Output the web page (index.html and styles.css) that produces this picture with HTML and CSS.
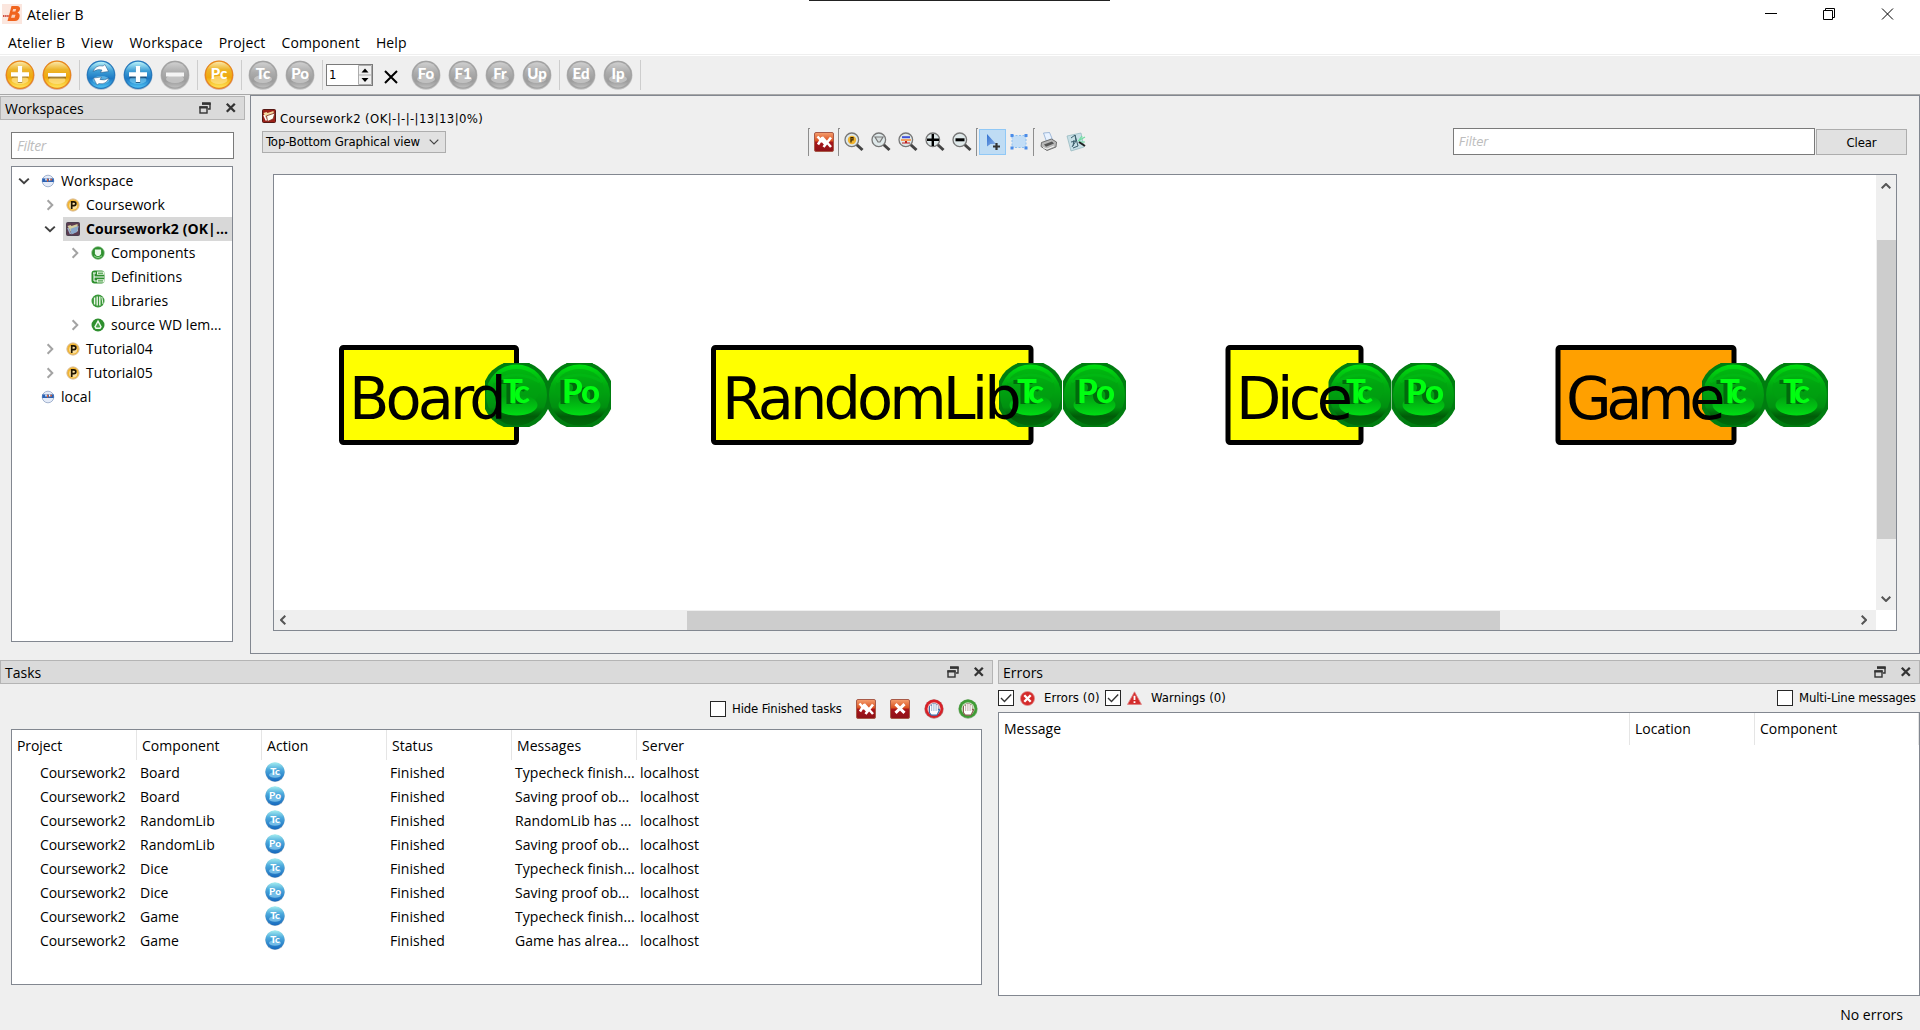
FILE: index.html
```html
<!DOCTYPE html>
<html lang="en">
<head>
<meta charset="utf-8">
<title>Atelier B</title>
<link rel="stylesheet" href="styles.css">
</head>
<body>
<svg class="defs" width="0" height="0">
  <defs>
    <linearGradient id="g-orange" x2="0" y2="1"><stop offset="0" stop-color="#fbe7a6"/><stop offset=".3" stop-color="#edb52b"/><stop offset=".6" stop-color="#f0a80c"/><stop offset="1" stop-color="#ffe55a"/></linearGradient>
    <linearGradient id="g-blue" x2="0" y2="1"><stop offset="0" stop-color="#b9f3fa"/><stop offset=".35" stop-color="#3f9fd6"/><stop offset=".65" stop-color="#1b78c4"/><stop offset="1" stop-color="#4fc3f3"/></linearGradient>
    <linearGradient id="g-gray" x2="0" y2="1"><stop offset="0" stop-color="#cfcfcf"/><stop offset=".4" stop-color="#adadad"/><stop offset=".75" stop-color="#9c9c9c"/><stop offset="1" stop-color="#bdbdbd"/></linearGradient>
    <linearGradient id="g-task" x2="0" y2="1"><stop offset="0" stop-color="#a5eef0"/><stop offset=".4" stop-color="#4aa8dc"/><stop offset="1" stop-color="#1769bd"/></linearGradient>
    <linearGradient id="g-red" x2="0" y2="1"><stop offset="0" stop-color="#f6a070"/><stop offset=".45" stop-color="#d9501f"/><stop offset=".5" stop-color="#a8161a"/><stop offset="1" stop-color="#8e1218"/></linearGradient>
    <linearGradient id="g-green" x2="0" y2="1"><stop offset="0" stop-color="#00e010"/><stop offset=".35" stop-color="#00a810"/><stop offset=".7" stop-color="#009010"/><stop offset=".85" stop-color="#005c08"/><stop offset="1" stop-color="#006c0a"/></linearGradient>
    <linearGradient id="g-pool" x2="0" y2="1"><stop offset="0" stop-color="#009a10"/><stop offset="1" stop-color="#00dc14"/></linearGradient>
    <linearGradient id="g-cursor" x2="1" y2="1"><stop offset="0" stop-color="#2f6fd0"/><stop offset="1" stop-color="#8fb4e8"/></linearGradient>
    <clipPath id="ball-clip"><rect x="-31.5" y="-32" width="63" height="64"/></clipPath>
  </defs>
  <symbol id="b-orange" viewBox="0 0 30 30"><circle cx="15" cy="15.3" r="14.5" fill="#d9a08a"/><circle cx="15" cy="14.8" r="14.2" fill="#e8871a"/><circle cx="15" cy="14.8" r="13" fill="url(#g-orange)"/><ellipse cx="15" cy="20" rx="8.5" ry="4" fill="#ffe9a0" opacity=".6"/></symbol>
  <symbol id="b-blue" viewBox="0 0 30 30"><circle cx="15" cy="15.3" r="14.5" fill="#9db4c8"/><circle cx="15" cy="14.8" r="14.2" fill="#2478bd"/><circle cx="15" cy="14.8" r="13" fill="url(#g-blue)"/><ellipse cx="15" cy="20" rx="8.5" ry="4" fill="#7fd0f2" opacity=".6"/></symbol>
  <symbol id="b-gray" viewBox="0 0 30 30"><circle cx="15" cy="15.3" r="14.5" fill="#c4c4c4"/><circle cx="15" cy="14.8" r="14" fill="#a2a2a2"/><circle cx="15" cy="14.8" r="12.6" fill="url(#g-gray)"/><ellipse cx="15" cy="19" rx="9" ry="4" fill="#d0d0d0" opacity=".7"/></symbol>
  <symbol id="b-task" viewBox="0 0 20 20"><circle cx="10" cy="10.4" r="9.6" fill="#a9b8c6"/><circle cx="10" cy="9.8" r="9.6" fill="url(#g-task)"/><ellipse cx="10" cy="13" rx="6" ry="2.8" fill="#8fd2f2" opacity=".7"/></symbol>
  <symbol id="float" viewBox="0 0 12 12"><path d="M3 1h8v6H9" fill="none" stroke="#333" stroke-width="1.4"/><path d="M3 .9h8.7v2H3z" fill="#333"/><rect x="1" y="5" width="7" height="6" fill="#dadada" stroke="#333" stroke-width="1.4"/><path d="M.4 4.3h8.2v2.2H.4z" fill="#333"/></symbol>
  <symbol id="close" viewBox="0 0 12 12"><path d="M1.8 1.8l8 8m0-8l-8 8" stroke="#333" stroke-width="2.3"/></symbol>
  <symbol id="open" viewBox="0 0 12 12"><path d="M1.2 3.6L6 8.2l4.8-4.6" fill="none" stroke="#404040" stroke-width="2"/></symbol>
  <symbol id="shut" viewBox="0 0 12 12"><path d="M3.6 1.2L8.3 6 3.6 10.8" fill="none" stroke="#a3a3a3" stroke-width="2"/></symbol>
  <symbol id="ws" viewBox="0 0 14 14"><circle cx="7" cy="7" r="5.8" fill="#e4ebf8" stroke="#a4b4d0"/><path d="M1.2 4.4h11.6v3.6H1.2z" fill="#2a62b4"/><path d="M4.3 4.6h1.4v1.8H4.3zM8 4.6h1.4v1.8H8z" fill="#fff"/><path d="M6 4.8h1.3v2.8H6zM9.4 4.8h1.5v1.8H9.4z" fill="#e06030"/></symbol>
  <symbol id="proj" viewBox="0 0 14 14"><circle cx="7" cy="7" r="6.1" fill="#f2b632" stroke="#d8b88c"/><circle cx="7.2" cy="7.4" r="4" fill="#fbe0a0"/><path d="M5.7 11V3.8h2.2a1.9 1.9 0 010 3.9H5.7" fill="none" stroke="#201400" stroke-width="1.7"/></symbol>
  <symbol id="folder" viewBox="0 0 14 14"><rect x=".5" y=".5" width="13" height="13" rx="1" fill="#5c3c50" stroke="#4a4050"/><path d="M1.5 4l3-1 1 1 6-2 .5 7-6 3z" fill="#d4cda0"/><path d="M5.500 12.500L4.500 6.800 12.700 4l-1.600 6z" fill="#8ba9cc"/><path d="M2 6l2.500 6" stroke="#9fb3cc" stroke-width="1.600"/></symbol>
  <symbol id="folder-red" viewBox="0 0 14 14"><rect x=".5" y=".5" width="13" height="13" rx="1" fill="#9c2018" stroke="#541814"/><path d="M1.500 4l3-1 1 1 6-2 .5 7-6 3z" fill="#f4dca0"/><path d="M5.500 12.500L4.500 6.800 12.900 4l-1.800 6z" fill="#fffdf2" stroke="#7a2418" stroke-width=".8"/><path d="M2 6l2.400 5.500" stroke="#fff" stroke-width="1.600"/></symbol>
  <symbol id="comp" viewBox="0 0 14 14"><circle cx="7" cy="7" r="6.400" fill="#2e8f2e" stroke="#a6d0a6" stroke-width=".6"/><path d="M3.900 3.500h6.200v4.500l-1.900 1.900H5.800L3.900 8z" fill="#e8f8e8"/><path d="M3 9.800q4 3.400 8 0" stroke="#8fd68f" fill="none"/></symbol>
  <symbol id="defn" viewBox="0 0 14 14"><rect x=".5" y=".5" width="13" height="13" rx="3" fill="#2e8f2e"/><path d="M6 1.500h7.500v3.300H6zM6 9.300h7.500v3.200H6z" fill="#e6f5e2"/><path d="M2 3h3M3 3v8h3M3 7h10" stroke="#fff" fill="none"/><path d="M7 3.200h5M7 10.900h5" stroke="#2e8f2e"/></symbol>
  <symbol id="libs" viewBox="0 0 14 14"><circle cx="7" cy="7" r="6.500" fill="#3a983a"/><path d="M3.600 3.500v7M6.200 2.500v9M8.800 2.500v9" stroke="#eef8ea" stroke-width="1.400"/><path d="M10.800 3l1.200 7" stroke="#eef8ea"/></symbol>
  <symbol id="wd" viewBox="0 0 14 14"><circle cx="7" cy="7" r="6.500" fill="#2e8f2e"/><path d="M7 3.200l3 5.500-1 1.500H5L4 8.700z" fill="#4aa84a" stroke="#f0faf0" stroke-width="1.400"/></symbol>
  <symbol id="lens" viewBox="0 0 20 20"><path d="M12.500 12.500l6 5.500" stroke="#444" stroke-width="3"/><circle cx="7.800" cy="7.800" r="6.800" fill="#dfe9ea" stroke="#777" stroke-width="1.300"/></symbol>
  <symbol id="xx" viewBox="0 0 20 20"><rect x=".5" y=".5" width="19" height="19" rx="1.500" fill="url(#g-red)" stroke="#a85a48"/><path d="M3.500 4.500l5 5.500m0-4.500L4 12.500M8 5l9 10m0-9.500L9.500 15M7.500 8l3.500 4" stroke="#fff" stroke-width="2.600"/></symbol>
  <symbol id="x1" viewBox="0 0 20 20"><rect x=".5" y=".5" width="19" height="19" rx="1.500" fill="url(#g-red)" stroke="#a85a48"/><path d="M5.500 5.200l9 8.600m0-8.600l-9 8.600" stroke="#fff" stroke-width="3"/></symbol>
  <symbol id="hand" viewBox="0 0 20 20"><path d="M6.200 8v5.500l1.500 2h4.800l2.300-4.500M7 12V7M9 11V5.500M11 11V5.500M13 11V6.800" fill="none" stroke="currentColor" stroke-width="2.600" stroke-linecap="round" stroke-linejoin="round"/><path d="M6 8.500v5l1.500 2h5.200l2.200-4.500-1.500 1H7" fill="#fff"/><path d="M6.800 12V7M8.900 12V5.200M11 12V5.200M13.100 12V6.600" stroke="#fff" stroke-width="1.600" stroke-linecap="round"/></symbol>
  <symbol id="check" viewBox="0 0 16 16"><rect x=".5" y=".5" width="15" height="15" fill="#fff" stroke="#262626"/><path d="M3 8l3.500 3.500L13.200 4.600" fill="none" stroke="#333" stroke-width="1.400"/></symbol>
  <symbol id="uncheck" viewBox="0 0 16 16"><rect x=".5" y=".5" width="15" height="15" fill="#fff" stroke="#262626"/></symbol>
</svg>

<header class="titlebar">
  <svg class="logo" width="20" height="20" viewBox="0 0 20 20"><rect width="20" height="20" fill="#fbe6de"/><path d="M9.500 2h5.500q3.500.3 3 3.300-.4 2.500-2.500 3.500 2.800.8 2 4.200-.8 4-4.500 4H5.500z" fill="#f0641e"/><path d="M11.200 5h3l-.8 2.400h-3zM10 10.700h3.500l-.9 3H9z" fill="#fbd2bc"/><path d="M1 12h6" stroke="#d05040" stroke-width="2" stroke-dasharray="1.500 .6"/></svg>
  <span class="app-name">Atelier B</span>
  <span class="screen-tab"></span>
  <svg class="win" width="150" height="20" viewBox="0 0 150 20"><path d="M5 9.500h12M63.500 6.500h9v9h-9zM65.500 6V4.500h9v9H73M122 4.500l11 11m0-11l-11 11" fill="none" stroke="#000"/></svg>
</header>
<nav class="menubar"><span>Atelier B</span><span>View</span><span>Workspace</span><span>Project</span><span>Component</span><span>Help</span></nav>

<div class="toolbar">
  <svg class="ball" viewBox="0 0 30 30"><use href="#b-orange"/><path d="M15 7v16M6.500 15.500h17" stroke="#806020" stroke-width="4.500" opacity=".6"/><path d="M15 6v16M6 14.300h18" stroke="#fff" stroke-width="4.300"/></svg>
  <svg class="ball" viewBox="0 0 30 30"><use href="#b-orange"/><path d="M6 16.500h18" stroke="#806020" stroke-width="4" opacity=".7"/><path d="M6 14.800h18" stroke="#fff" stroke-width="3.600"/></svg>
  <i class="sep"></i>
  <svg class="ball" viewBox="0 0 30 30"><use href="#b-blue"/><path d="M7 11.500q3-7 10-5.500l2-1.500 3.500 7-8 1 1.500-2.500q-4-1.500-9 1.500zM23 18q-3 7-10 5.500l-2 1.500-3.500-7 8-1-1.500 2.500q4 1.500 9-1.500z" fill="#fff" stroke="#205080" stroke-width=".5"/></svg>
  <svg class="ball" viewBox="0 0 30 30"><use href="#b-blue"/><path d="M15 7v16M6.500 16h17" stroke="#103a60" stroke-width="4.500" opacity=".7"/><path d="M15 6v16M6 14.300h18" stroke="#fff" stroke-width="4.300"/></svg>
  <svg class="ball" viewBox="0 0 30 30"><use href="#b-gray"/><path d="M6 14.500h18" stroke="#f4f4f4" stroke-width="4"/></svg>
  <i class="sep"></i>
  <svg class="ball" viewBox="0 0 30 30"><use href="#b-orange"/><text x="15" y="18.500">Pc</text></svg>
  <i class="sep"></i>
  <svg class="ball" viewBox="0 0 30 30"><use href="#b-gray"/><text x="15" y="18.500">Tc</text></svg>
  <svg class="ball" viewBox="0 0 30 30"><use href="#b-gray"/><text x="15" y="18.500">Po</text></svg>
  <i class="sep"></i>
  <div class="spin"><span>1</span><svg width="14" height="20" viewBox="0 0 14 20"><path d="M.5.500h13v19H.5zM.5 10h13" fill="#f0f0f0" stroke="#adadad"/><path d="M3.500 7.500L7 3.500l3.500 4zM3.500 13L7 17l3.500-4z" fill="#000"/></svg></div>
  <svg class="times" width="16" height="16" viewBox="0 0 16 16"><path d="M2 2l12 12M14 2L2 14" stroke="#000" stroke-width="2"/></svg>
  <svg class="ball" viewBox="0 0 30 30"><use href="#b-gray"/><text x="15" y="18.500">Fo</text></svg>
  <svg class="ball" viewBox="0 0 30 30"><use href="#b-gray"/><text x="15" y="18.500">F1</text></svg>
  <svg class="ball" viewBox="0 0 30 30"><use href="#b-gray"/><text x="15" y="18.500">Fr</text></svg>
  <svg class="ball" viewBox="0 0 30 30"><use href="#b-gray"/><text x="15" y="18.500">Up</text></svg>
  <i class="sep"></i>
  <svg class="ball" viewBox="0 0 30 30"><use href="#b-gray"/><text x="15" y="18.500">Ed</text></svg>
  <svg class="ball" viewBox="0 0 30 30"><use href="#b-gray"/><text x="15" y="18.500">Ip</text></svg>
  <i class="sep"></i>
</div>

<main class="upper">
  <aside class="workspaces">
    <div class="dock"><span>Workspaces</span><svg><use href="#float"/></svg><svg><use href="#close"/></svg></div>
    <div class="field tree-filter">Filter</div>
    <ul class="tree">
      <li class="l0"><svg class="arrow"><use href="#open"/></svg><svg class="ico"><use href="#ws"/></svg><span>Workspace</span></li>
      <li class="l1"><svg class="arrow"><use href="#shut"/></svg><svg class="ico"><use href="#proj"/></svg><span>Coursework</span></li>
      <li class="l1 sel"><svg class="arrow"><use href="#open"/></svg><svg class="ico"><use href="#folder"/></svg><span>Coursework2 (OK|...</span></li>
      <li class="l2"><svg class="arrow"><use href="#shut"/></svg><svg class="ico"><use href="#comp"/></svg><span>Components</span></li>
      <li class="l2"><svg class="arrow"></svg><svg class="ico"><use href="#defn"/></svg><span>Definitions</span></li>
      <li class="l2"><svg class="arrow"></svg><svg class="ico"><use href="#libs"/></svg><span>Libraries</span></li>
      <li class="l2"><svg class="arrow"><use href="#shut"/></svg><svg class="ico"><use href="#wd"/></svg><span>source WD lem...</span></li>
      <li class="l1"><svg class="arrow"><use href="#shut"/></svg><svg class="ico"><use href="#proj"/></svg><span>Tutorial04</span></li>
      <li class="l1"><svg class="arrow"><use href="#shut"/></svg><svg class="ico"><use href="#proj"/></svg><span>Tutorial05</span></li>
      <li class="l0"><svg class="arrow"></svg><svg class="ico"><use href="#ws"/></svg><span>local</span></li>
    </ul>
  </aside>

  <section class="editor">
    <div class="controls">
      <div class="view-pick">
        <div class="caption"><svg width="14" height="14"><use href="#folder-red"/></svg><span>Coursework2 (OK|-|-|-|13|13|0%)</span></div>
        <div class="combo"><span>Top-Bottom Graphical view</span><svg width="10" height="6" viewBox="0 0 10 6"><path d="M.7.700L5 5 9.300.700" fill="none" stroke="#444" stroke-width="1.200"/></svg></div>
      </div>
      <div class="view-tools">
        <i></i><svg><use href="#xx"/></svg><i></i>
        <svg><use href="#lens"/><circle cx="8" cy="8" r="4.200" fill="#f2b632"/><path d="M7 10.500V5.500h2v2.500H7.500" fill="none" stroke="#302000" stroke-width="1.200"/></svg>
        <svg><use href="#lens"/><path d="M4 5h8l-3 5H7z" fill="#d5dcdc" stroke="#777" stroke-width="1.200"/></svg>
        <svg><use href="#lens"/><path d="M4 4.200h8v2H4z" fill="#4050d8"/><path d="M3 7h10v2H3z" fill="#f3a060"/><path d="M7 9h2v2H7zM4 10.500h8v1H4z" fill="#c02020"/></svg>
        <svg><use href="#lens"/><path d="M7.800 2v12M2 7.800h12" stroke="#000" stroke-width="2.400"/></svg>
        <svg><use href="#lens"/><path d="M3.500 7.800h9" stroke="#000" stroke-width="3"/></svg>
        <i></i>
        <b><svg><path d="M4 2v12.500l3.500-2.500h5.500z" fill="url(#g-cursor)"/><path d="M13.500 11v7M10 14.500h7" stroke="#333" stroke-width="2.200"/></svg></b>
        <svg class="region"><rect x="3" y="3.500" width="14" height="12" fill="#c2ddf6" stroke="#8ec0f0" stroke-dasharray="2 1.500"/><path d="M1.500 2h3v3h-3zM15.500 2h3v3h-3zM1.500 14.500h3v3h-3zM15.500 14.500h3v3h-3z" fill="#4a8be8"/></svg>
        <i></i>
        <svg class="printer"><path d="M4.500 1l6-.5 3 7-6 2z" fill="#e8f2ff" stroke="#7fa0cc" stroke-width=".7"/><path d="M2.500 10.500l10-3.500 5 3-.5 5-9 3.500-6-4z" fill="#b8b8b8" stroke="#555" stroke-width=".8"/><path d="M5 12.500l8-3 2 2-8 3.200z" fill="#555"/><path d="M4 15.500l4 1.500 7-3" stroke="#f4f4f4" fill="none"/></svg>
        <svg class="graph"><path d="M1 4l14-3 3 14-13 4z" fill="#c7dfe6" stroke="#8fb4bc" stroke-width=".7"/><path d="M5 6l4-3 1 6-4 6M9 3l3 11M10 9l-5 1M12 14l-5 2M8 8l-1 6" fill="none" stroke="#3c5f6c"/><path d="M12 9l7-4M13 10h6M13 8l3-4" stroke="#70e0a0" stroke-width="1.200"/><path d="M13 10l6 4" stroke="#222" stroke-width="2"/></svg>
      </div>
      <div class="view-filter"><div class="field">Filter</div><div class="button">Clear</div></div>
    </div>
    <div class="canvas">
      <svg class="graph-area" width="1602" height="435" viewBox="274 175 1602 435">
        <defs>
          <g id="gball"><g clip-path="url(#ball-clip)"><circle r="34.500" fill="#007d10"/><circle r="30.500" fill="url(#g-green)"/><ellipse cy="-7" rx="24" ry="19" fill="#00a010" opacity=".55"/><path d="M-23-13Q0-27 23-13" fill="none" stroke="#00bd14" stroke-width="3" opacity=".5"/><ellipse cy="10" rx="21" ry="10.500" fill="url(#g-pool)"/></g></g>
        </defs>
        <g class="node">
          <rect x="341.500" y="347.500" width="175" height="95" rx="2" fill="#ff0"/><use href="#gball" x="516.500" y="395"/><use href="#gball" x="579.500" y="395"/>
          <g class="mark"><text x="503" y="403" textLength="27">Tc</text><text x="562" y="403" textLength="38">Po</text></g>
          <text class="name" x="349" y="419" letter-spacing="-3.900">Board</text>
        </g>
        <g class="node">
          <rect x="713.500" y="347.500" width="317.500" height="95" rx="2" fill="#ff0"/><use href="#gball" x="1030.500" y="395"/><use href="#gball" x="1094.500" y="395"/>
          <g class="mark"><text x="1017" y="403" textLength="27">Tc</text><text x="1077" y="403" textLength="38">Po</text></g>
          <text class="name" x="722" y="419" letter-spacing="-3.900">RandomLib</text>
        </g>
        <g class="node">
          <rect x="1228" y="347.500" width="133" height="95" rx="2" fill="#ff0"/><use href="#gball" x="1360" y="395"/><use href="#gball" x="1423.500" y="395"/>
          <g class="mark"><text x="1346" y="403" textLength="27">Tc</text><text x="1406" y="403" textLength="38">Po</text></g>
          <text class="name" x="1236" y="419" letter-spacing="-4.500">Dice</text>
        </g>
        <g class="node">
          <rect x="1558" y="347.500" width="176" height="95" rx="2" fill="#ffa000"/><use href="#gball" x="1733.500" y="395"/><use href="#gball" x="1796.500" y="395"/>
          <g class="mark"><text x="1720" y="403" textLength="27">Tc</text><text x="1783" y="403" textLength="27">Tc</text></g>
          <text class="name" x="1566" y="419" letter-spacing="-5.400">Game</text>
        </g>
      </svg>
      <div class="vbar"><svg width="10" height="6" viewBox="0 0 10 6"><path d="M.7 5.300L5 1l4.300 4.300" /></svg><i></i><svg width="10" height="6" viewBox="0 0 10 6"><path d="M.7.700L5 5 9.300.700"/></svg></div>
      <div class="hbar"><svg width="6" height="10" viewBox="0 0 6 10"><path d="M5.300.700L1 5l4.300 4.300"/></svg><i></i><svg width="6" height="10" viewBox="0 0 6 10"><path d="M.7.700L5 5 .7 9.300"/></svg></div>
    </div>
  </section>
</main>

<div class="lower">
  <section class="tasks">
    <div class="dock"><span>Tasks</span><svg><use href="#float"/></svg><svg><use href="#close"/></svg></div>
    <div class="task-tools">
      <svg class="cb"><use href="#uncheck"/></svg><span class="small hide-label">Hide Finished tasks</span>
      <svg class="tool"><use href="#xx"/></svg><svg class="tool"><use href="#x1"/></svg>
      <svg class="tool blue"><circle cx="10" cy="10" r="9.700" fill="#b98080"/><circle cx="10" cy="9.800" r="9.200" fill="#d82028"/><circle cx="10" cy="9.800" r="6.600" fill="#ecc4c6"/><use href="#hand"/></svg>
      <svg class="tool brown"><circle cx="10" cy="10" r="9.700" fill="#88b080"/><circle cx="10" cy="9.800" r="9.200" fill="#3f9c34"/><circle cx="10" cy="9.800" r="6.600" fill="#c8e0c0"/><use href="#hand"/></svg>
    </div>
    <div class="task-table">
      <div class="row head"><span>Project</span><span>Component</span><span>Action</span><span>Status</span><span>Messages</span><span>Server</span></div>
      <div class="row"><span>Coursework2</span><span>Board</span><span><svg><use href="#b-task"/><text x="10" y="13">Tc</text></svg></span><span>Finished</span><span>Typecheck finish...</span><span>localhost</span></div>
      <div class="row"><span>Coursework2</span><span>Board</span><span><svg><use href="#b-task"/><text x="10" y="13">Po</text></svg></span><span>Finished</span><span>Saving proof ob...</span><span>localhost</span></div>
      <div class="row"><span>Coursework2</span><span>RandomLib</span><span><svg><use href="#b-task"/><text x="10" y="13">Tc</text></svg></span><span>Finished</span><span>RandomLib has ...</span><span>localhost</span></div>
      <div class="row"><span>Coursework2</span><span>RandomLib</span><span><svg><use href="#b-task"/><text x="10" y="13">Po</text></svg></span><span>Finished</span><span>Saving proof ob...</span><span>localhost</span></div>
      <div class="row"><span>Coursework2</span><span>Dice</span><span><svg><use href="#b-task"/><text x="10" y="13">Tc</text></svg></span><span>Finished</span><span>Typecheck finish...</span><span>localhost</span></div>
      <div class="row"><span>Coursework2</span><span>Dice</span><span><svg><use href="#b-task"/><text x="10" y="13">Po</text></svg></span><span>Finished</span><span>Saving proof ob...</span><span>localhost</span></div>
      <div class="row"><span>Coursework2</span><span>Game</span><span><svg><use href="#b-task"/><text x="10" y="13">Tc</text></svg></span><span>Finished</span><span>Typecheck finish...</span><span>localhost</span></div>
      <div class="row"><span>Coursework2</span><span>Game</span><span><svg><use href="#b-task"/><text x="10" y="13">Tc</text></svg></span><span>Finished</span><span>Game has alrea...</span><span>localhost</span></div>
    </div>
  </section>
  <section class="errors">
    <div class="dock"><span>Errors</span><svg><use href="#float"/></svg><svg><use href="#close"/></svg></div>
    <div class="error-tools">
      <svg class="cb"><use href="#check"/></svg>
      <svg class="flag" viewBox="0 0 14 14"><circle cx="7" cy="7" r="6.600" fill="#d42a2a" stroke="#e09090" stroke-width=".7"/><path d="M4 4l6 6m0-6l-6 6" stroke="#fff" stroke-width="2.200"/></svg>
      <span class="small err-label">Errors (0)</span>
      <svg class="cb"><use href="#check"/></svg>
      <svg class="flag warn" viewBox="0 0 14 14"><path d="M7 .8L13.500 12.500H.5z" fill="#d42a2a" stroke="#e08080" stroke-width=".8" stroke-linejoin="round"/><path d="M7 4.500v4M7 9.500v1.700" stroke="#fff" stroke-width="1.700"/></svg>
      <span class="small warn-label">Warnings (0)</span>
      <svg class="cb multi"><use href="#uncheck"/></svg><span class="small multi-label">Multi-Line messages</span>
    </div>
    <div class="error-table"><div class="ehead"><span>Message</span><span>Location</span><span>Component</span></div></div>
    <footer>No errors</footer>
  </section>
</div>
</body>
</html>
```
FILE: styles.css
```css
* { box-sizing: border-box; }
body { margin: 0; width: 1920px; height: 1030px; overflow: hidden; display: flex; flex-direction: column; background: #efefef; color: #000; font: 14px/20px "Open Sans", "Noto Sans", sans-serif; letter-spacing: 0; white-space: nowrap; }
svg { display: block; flex: none; }
.defs { position: absolute; }
.small, .caption, .combo, .field, .button, .spin { font-family: "DejaVu Sans Condensed", "DejaVu Sans", sans-serif; font-stretch: condensed; font-size: 13px; letter-spacing: -0.15px; }

.titlebar { height: 28px; background: #fff; display: flex; align-items: flex-start; padding-left: 2px; }
.logo { margin-top: 4px; }
.app-name { margin: 5px 0 0 5px; width: 782px; letter-spacing: .2px; }
.screen-tab { width: 301px; height: 1px; background: #222; }
.win { margin: 4px 0 0 650px; }
.menubar { height: 28px; background: #fff; border-bottom: 1px solid #fff; box-shadow: inset 0 -1px #efefef; display: flex; padding: 5px 0 0 8px; gap: 16px; letter-spacing: .14px; }
.menubar span:first-child { letter-spacing: .25px; }
.menubar span:nth-child(2) { letter-spacing: .4px; }
.toolbar { height: 39px; border-bottom: 1px solid #a8a8a8; display: flex; align-items: center; padding: 0 0 0 5px; }
.ball { width: 30px; height: 30px; margin-right: 7px; }
.ball text { font: 900 15px Lato, sans-serif; fill: #fff; text-anchor: middle; letter-spacing: 0; }
.toolbar .sep { width: 1px; height: 30px; background: #cdcdcd; margin: 0 6px 0 0; }
.spin { width: 47px; height: 22px; border: 1px solid #7a7a7a; background: #fff; display: flex; justify-content: space-between; align-items: center; padding-left: 2px; margin-left: -3px; }
.times { margin: 4px 12px 0 10px; }

.upper { height: 559px; display: flex; }
.workspaces { width: 250px; display: flex; flex-direction: column; padding-top: 1px; }
.dock { height: 24px; background: #dadada; border: 1px solid #b4b4b4; display: flex; align-items: center; padding: 0 7px 0 4px; }
.dock span { flex: 1; padding-top: 2px; }
.dock svg { width: 12px; height: 12px; margin-left: 14px; }
.workspaces .dock { width: 245px; height: 24px; }
.field { height: 27px; background: #fff; border: 1px solid #7a7a7a; color: #bdbdbd; font-style: italic; padding: 3px 5px; }
.tree-filter { margin: 12px 0 0 11px; width: 223px; font: italic 14px/19px "Open Sans", sans-serif; letter-spacing: -0.3px; }
.tree { list-style: none; margin: 7px 0 0 11px; padding: 2px 0 0; width: 222px; height: 476px; background: #fff; border: 1px solid #828790; }
.tree li { height: 24px; display: flex; align-items: center; letter-spacing: .05px; }
.arrow { width: 12px; height: 12px; margin: -1px 10px 0 0; }
.ico { width: 14px; height: 14px; margin: -1px 6px 0 0; }
.l0 { padding-left: 6px; }
.l0 .arrow { margin-right: 11px; }
.l1 { padding-left: 32px; }
.l2 { padding-left: 57px; }
.tree .sel { font-weight: 700; letter-spacing: .08px; background: linear-gradient(to right, transparent 51px, #d8d8d8 51px); }

.editor { flex: 1; border: 1px solid #828790; padding-left: 11px; }
.controls { height: 78px; display: flex; }
.view-pick { width: 546px; padding-top: 14px; }
.caption { display: flex; gap: 4px; height: 21px; line-height: 18px; letter-spacing: .4px; }
.caption svg { margin-top: -1px; }
.combo { width: 184px; height: 22px; border: 1px solid #adadad; background: #e1e1e1; display: flex; align-items: center; justify-content: space-between; padding: 0 6px 0 3px; letter-spacing: -0.1px; }
.view-tools { width: 645px; display: flex; align-items: center; padding-top: 14px; height: 78px; }
.view-tools > svg { width: 20px; height: 20px; margin-right: 7px; }
.view-tools i { width: 2px; height: 28px; border-left: 1px solid #8e8e8e; border-top: 1px solid #8e8e8e; margin-right: 4px; }
.view-tools > svg:nth-of-type(1) { margin-right: 4px; }
.view-tools > svg:nth-of-type(6) { margin-right: 4px; }
.view-tools i:nth-of-type(3) { margin-right: 1px; }
.view-tools b { width: 27px; height: 26px; background: #bfdcf4; border: 1px solid #90c8f6; padding: 2px 3px; margin-right: 3px; }
.view-tools b svg { width: 20px; height: 20px; }
.view-tools .region { margin-right: 4px; }
.view-filter { display: flex; align-items: flex-start; padding-top: 32px; gap: 1px; }
.view-filter .field { width: 362px; line-height: 19px; }
.button { width: 91px; height: 26px; margin-top: 1px; border: 1px solid #adadad; background: #e1e1e1; text-align: center; line-height: 25px; }
.canvas { margin: 0 0 0 11px; width: 1624px; height: 457px; background: #fff; border: 1px solid #828790; display: grid; grid-template: 435px 20px / 1602px 20px; }
.node rect { stroke: #000; stroke-width: 5; }
.name { font: 59px "DejaVu Sans", sans-serif; }
.mark text { font: 900 33px Lato, sans-serif; fill: #0f1; letter-spacing: 0; filter: drop-shadow(-4px 1px 0 #006a0c); }
.vbar, .hbar { background: #efefef; display: flex; align-items: center; justify-content: space-between; }
.vbar { flex-direction: column; padding: 8px 0 8px; }
.vbar i { width: 19px; height: 299px; background: #cdcdcd; margin-top: -6px; }
.hbar { padding: 0 9px 0 6px; }
.hbar i { width: 813px; height: 19px; background: #cdcdcd; margin-left: 40px; }
.vbar path, .hbar path { fill: none; stroke: #555; stroke-width: 2; }

.lower { flex: 1; display: flex; gap: 5px; padding-top: 6px; }
.tasks { width: 993px; }
.errors { flex: 1; }
.task-tools { height: 45px; display: flex; align-items: center; padding: 5px 0 0 710px; }
.cb { width: 16px; height: 16px; }
.hide-label { margin-left: 6px; width: 124px; }
.tool { width: 20px; height: 20px; margin-right: 14px; }
.blue { color: #3c6ea8; }
.brown { color: #8a5a50; }
.task-table { margin-left: 11px; width: 971px; height: 256px; background: #fff; border: 1px solid #828790; }
.row { display: grid; grid-template-columns: 125px 125px 125px 125px 125px 1fr; height: 24px; line-height: 25px; }
.row span { padding-left: 3px; overflow: hidden; letter-spacing: .05px; }
.row span:first-child { padding-left: 28px; letter-spacing: -0.08px; }
.row svg { width: 20px; height: 20px; margin-top: 2px; }
.row text { font: 900 10px Lato, sans-serif; fill: #fff; text-anchor: middle; letter-spacing: 0; }
.head { height: 30px; line-height: 32px; }
.head span, .head span:first-child { padding-left: 5px; height: 30px; border-right: 1px solid #e5e5e5; }
.head span:last-child { border: 0; }
.error-tools { height: 28px; display: flex; align-items: center; }
.flag { width: 15px; height: 15px; margin-left: 6px; }
.err-label { margin-left: 9px; width: 61px; letter-spacing: 0.08px; }
.warn { margin-left: 6px; }
.warn-label { margin-left: 9px; letter-spacing: 0.05px; }
.multi { margin-left: auto; }
.multi-label { margin-left: 6px; width: 121px; }
.error-table { height: 284px; background: #fff; border: 1px solid #828790; }
.ehead { display: grid; grid-template-columns: 631px 125px 1fr; height: 30px; line-height: 32px; }
.ehead span { padding-left: 5px; border-right: 1px solid #e5e5e5; }
footer { text-align: right; padding: 9px 17px 0; }
```
